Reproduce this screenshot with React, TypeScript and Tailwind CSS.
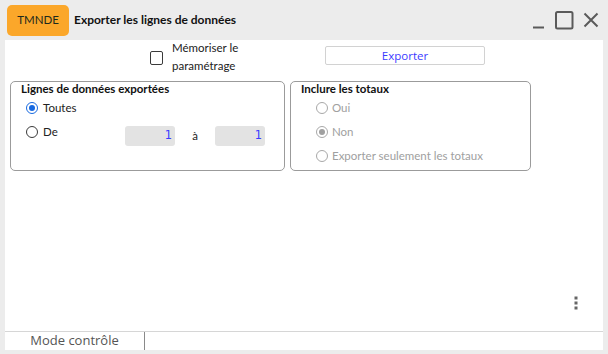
import React from "react";

function Radio({ checked, disabled }: { checked?: boolean; disabled?: boolean }) {
  const border = disabled ? "border-[#a8a8a8]" : checked ? "border-[#1769e0]" : "border-[#3a3a3a]";
  const dot = disabled ? "bg-[#a0a0a0]" : "bg-[#1769e0]";
  return (
    <div className={`w-[12px] h-[12px] rounded-full border ${checked && !disabled ? "border-[1.5px]" : ""} ${border} bg-white flex items-center justify-center shrink-0`}>
      {checked ? <div className={`w-[6px] h-[6px] rounded-full ${dot}`} /> : null}
    </div>
  );
}

function NumInput() {
  return (
    <div className="w-[50px] h-[20px] rounded-[3px] bg-[#e3e3e3] flex items-center justify-end pr-[3px] text-[11.5px] text-[#3b3bff] font-['DejaVu_Sans',sans-serif]">
      1
    </div>
  );
}

export default function App() {
  return (
    <div className="w-[608px] h-[354px] bg-[#ececec] flex flex-col overflow-hidden font-['Lato','Noto_Sans',sans-serif] text-[#1a1a1a]">
      {/* Title bar */}
      <div className="h-[40px] shrink-0 flex items-center pl-[7px] pr-[9px]">
        <div className="w-[62px] h-[31px] rounded-[5px] bg-[#fba72a] flex items-center justify-center text-[11.5px] text-[#1d2a1d]">
          TMNDE
        </div>
        <div className="ml-[5px] text-[12px] font-bold text-[#111]">Exporter les lignes de données</div>
        <div className="flex-1" />
        <div className="flex items-center">
          <svg width="14" height="20" viewBox="0 0 14 20" className="mr-[9px]">
            <rect x="1" y="16.5" width="11" height="2" fill="#5a5a5a" />
          </svg>
          <svg width="19" height="19" viewBox="0 0 19 19" className="mr-[9px]">
            <rect x="1" y="1" width="16.5" height="16.5" rx="1.5" fill="none" stroke="#5a5a5a" strokeWidth="2" />
          </svg>
          <svg width="16" height="16" viewBox="0 0 16 16">
            <path d="M1.5 1.5 L14.5 14.5 M14.5 1.5 L1.5 14.5" stroke="#5a5a5a" strokeWidth="2" fill="none" />
          </svg>
        </div>
      </div>

      {/* Main content */}
      <div className="flex-1 mx-[5px] bg-white flex flex-col">
        <div className="flex h-[34px] ml-[145px]">
          <div className="w-[175px] flex items-center">
            <div className="w-[13px] h-[14px] border-[1.5px] border-[#3a3a3a] rounded-[2px] mt-[2px]" />
            <div className="ml-[9px] text-[11.5px] leading-[18px] text-[#222] -mt-[1px]">
              Mémoriser le
              <br />
              paramétrage
            </div>
          </div>
          <div className="w-[160px] h-[19px] mt-[6px] border border-[#d2d2d2] rounded-[2px] flex items-center justify-center text-[11.5px] text-[#3b3bff] font-['Open_Sans',sans-serif]">
            Exporter
          </div>
        </div>

        <div className="flex ml-[5px] mt-[7px] gap-[5px]">
          <div className="w-[275px] h-[90px] border border-[#9b9b9b] rounded-[5px]">
            <div className="pl-[10px] text-[11.5px] leading-[14px] font-bold text-[#111]">Lignes de données exportées</div>
            <div className="h-[24px] flex items-center pl-[15px]">
              <Radio checked />
              <span className="ml-[5px] text-[11.5px] text-[#222]">Toutes</span>
            </div>
            <div className="flex pl-[15px]">
              <div className="w-[99px] h-[24px] flex items-center">
                <Radio />
                <span className="ml-[5px] text-[11.5px] text-[#222]">De</span>
              </div>
              <div className="flex items-center mt-[6px]">
                <NumInput />
                <div className="w-[40px] text-center text-[11.5px] text-[#222]">à</div>
                <NumInput />
              </div>
            </div>
          </div>

          <div className="w-[241px] h-[90px] border border-[#9b9b9b] rounded-[5px]">
            <div className="pl-[10px] text-[11.5px] leading-[14px] font-bold text-[#111]">Inclure les totaux</div>
            <div className="h-[24px] flex items-center pl-[25px]">
              <Radio disabled />
              <span className="ml-[4px] text-[11.5px] text-[#a0a0a0]">Oui</span>
            </div>
            <div className="h-[24px] flex items-center pl-[25px]">
              <Radio disabled checked />
              <span className="ml-[4px] text-[11.5px] text-[#a0a0a0]">Non</span>
            </div>
            <div className="h-[24px] flex items-center pl-[25px]">
              <Radio disabled />
              <span className="ml-[4px] text-[11.5px] text-[#a0a0a0]">Exporter seulement les totaux</span>
            </div>
          </div>
        </div>

        <div className="flex-1" />
        <div className="flex justify-end pr-[25px] pb-[21px]">
          <svg width="4" height="14" viewBox="0 0 4 14">
            <rect x="0.5" y="0.5" width="3" height="3" fill="#666" />
            <rect x="0.5" y="5.5" width="3" height="3" fill="#666" />
            <rect x="0.5" y="10.5" width="3" height="3" fill="#666" />
          </svg>
        </div>
      </div>

      {/* Status bar */}
      <div className="h-[1px] mx-[5px] bg-[#d6d6d6] shrink-0" />
      <div className="h-[18px] mx-[5px] bg-white flex shrink-0">
        <div className="w-[140px] border-r border-[#8a8a8a] flex items-center justify-center text-[13px] text-[#555] font-['Open_Sans',sans-serif]">
          Mode contrôle
        </div>
      </div>
      <div className="h-[4px] shrink-0" />
    </div>
  );
}
